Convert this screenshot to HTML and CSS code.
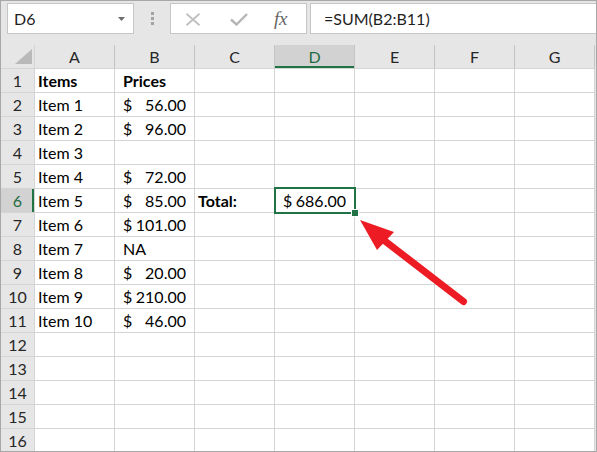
FILE: index.html
```html
<!DOCTYPE html>
<html>
<head>
<meta charset="utf-8">
<link rel="stylesheet" href="styles.css">
</head>
<body>
<div class="window">
  <div class="toolbar">
    <div class="namebox">
      <span>D6</span>
      <svg class="dd" width="7" height="4" viewBox="0 0 7 4"><polygon points="0,0 7,0 3.5,4" fill="#6d6d6d"/></svg>
    </div>
    <div class="grip"><i></i><i></i><i></i></div>
    <div class="fbtns">
      <svg class="x" width="16" height="13" viewBox="0 0 16 13"><path d="M1.5 0.8 L14.5 12.2 M14.5 0.8 L1.5 12.2" stroke="#c0c0c0" stroke-width="1.8" fill="none"/></svg>
      <svg class="ok" width="18" height="13" viewBox="0 0 18 13"><path d="M1 6.5 L6.5 11.5 L17 1" stroke="#b5b5b5" stroke-width="2.4" fill="none"/></svg>
      <span class="fx">fx</span>
    </div>
    <div class="finput">=SUM(B2:B11)</div>
  </div>

  <div class="sheet">
    <div class="corner"><svg width="33" height="23" viewBox="0 0 33 23"><polygon points="14,19 31,4 31,19" fill="#b9b9b9"/></svg></div>
    <div class="ch">A</div><div class="ch">B</div><div class="ch">C</div><div class="ch sel">D</div><div class="ch">E</div><div class="ch">F</div><div class="ch">G</div>

    <div class="rh">1</div><div class="c bold">Items</div><div class="c b bold">Prices</div><div class="c"></div><div class="c"></div><div class="c"></div><div class="c"></div><div class="c"></div>
    <div class="rh">2</div><div class="c">Item 1</div><div class="c acc"><span>$</span><span>56.00</span></div><div class="c"></div><div class="c"></div><div class="c"></div><div class="c"></div><div class="c"></div>
    <div class="rh">3</div><div class="c">Item 2</div><div class="c acc"><span>$</span><span>96.00</span></div><div class="c"></div><div class="c"></div><div class="c"></div><div class="c"></div><div class="c"></div>
    <div class="rh">4</div><div class="c">Item 3</div><div class="c"></div><div class="c"></div><div class="c"></div><div class="c"></div><div class="c"></div><div class="c"></div>
    <div class="rh">5</div><div class="c">Item 4</div><div class="c acc"><span>$</span><span>72.00</span></div><div class="c"></div><div class="c"></div><div class="c"></div><div class="c"></div><div class="c"></div>
    <div class="rh sel">6</div><div class="c">Item 5</div><div class="c acc"><span>$</span><span>85.00</span></div><div class="c bold">Total:</div><div class="c acc active"><span>$</span><span>686.00</span></div><div class="c"></div><div class="c"></div><div class="c"></div>
    <div class="rh">7</div><div class="c">Item 6</div><div class="c acc"><span>$</span><span>101.00</span></div><div class="c"></div><div class="c"></div><div class="c"></div><div class="c"></div><div class="c"></div>
    <div class="rh">8</div><div class="c">Item 7</div><div class="c b">NA</div><div class="c"></div><div class="c"></div><div class="c"></div><div class="c"></div><div class="c"></div>
    <div class="rh">9</div><div class="c">Item 8</div><div class="c acc"><span>$</span><span>20.00</span></div><div class="c"></div><div class="c"></div><div class="c"></div><div class="c"></div><div class="c"></div>
    <div class="rh">10</div><div class="c">Item 9</div><div class="c acc"><span>$</span><span>210.00</span></div><div class="c"></div><div class="c"></div><div class="c"></div><div class="c"></div><div class="c"></div>
    <div class="rh">11</div><div class="c">Item 10</div><div class="c acc"><span>$</span><span>46.00</span></div><div class="c"></div><div class="c"></div><div class="c"></div><div class="c"></div><div class="c"></div>
    <div class="rh">12</div><div class="c"></div><div class="c"></div><div class="c"></div><div class="c"></div><div class="c"></div><div class="c"></div><div class="c"></div>
    <div class="rh">13</div><div class="c"></div><div class="c"></div><div class="c"></div><div class="c"></div><div class="c"></div><div class="c"></div><div class="c"></div>
    <div class="rh">14</div><div class="c"></div><div class="c"></div><div class="c"></div><div class="c"></div><div class="c"></div><div class="c"></div><div class="c"></div>
    <div class="rh">15</div><div class="c"></div><div class="c"></div><div class="c"></div><div class="c"></div><div class="c"></div><div class="c"></div><div class="c"></div>
    <div class="rh">16</div><div class="c"></div><div class="c"></div><div class="c"></div><div class="c"></div><div class="c"></div><div class="c"></div><div class="c"></div>
  </div>

  <svg class="arrow" width="595" height="450" viewBox="0 0 595 450">
    <line x1="462.5" y1="300.5" x2="380" y2="237" stroke="#ed1c24" stroke-width="7" stroke-linecap="round"/>
    <polygon points="359,219 393,231 376,249" fill="#ed1c24"/>
  </svg>
</div>
</body>
</html>
```
FILE: styles.css
```css
html, body {
  margin: 0;
  padding: 0;
  background: #ffffff;
}

body {
  font-family: "Lato", "Liberation Sans", sans-serif;
  font-size: 16px;
  color: #000;
}

.window {
  position: relative;
  width: 595px;
  height: 450px;
  border: 1px solid #a8a8a8;
  background: #e6e6e6;
  overflow: hidden;
}

/* ---------- formula bar ---------- */
.toolbar {
  display: flex;
  align-items: flex-start;
  height: 44px;
  box-sizing: border-box;
  padding: 2px 0 0 6px;
}

.namebox {
  width: 127px;
  height: 31px;
  box-sizing: border-box;
  border: 1px solid #c6c6c6;
  background: #fff;
  display: flex;
  align-items: center;
  justify-content: space-between;
  padding: 0 8px 0 6px;
  color: #1f1f1f;
}

.grip {
  margin: 9px 0 0 17px;
  display: flex;
  flex-direction: column;
  gap: 2px;
}

.grip i {
  display: block;
  width: 3px;
  height: 3px;
  background: #a2a2a2;
}

.fbtns {
  margin-left: 16px;
  width: 137px;
  height: 31px;
  box-sizing: border-box;
  border: 1px solid #c6c6c6;
  background: #fff;
  display: flex;
  align-items: center;
  padding-left: 14px;
}

.fbtns .x {
  margin-top: 1px;
}

.fbtns .ok {
  margin-left: 29px;
  margin-top: 2px;
}

.fx {
  margin-left: 26px;
  font-family: "Liberation Serif", "DejaVu Serif", serif;
  font-style: italic;
  font-size: 19px;
  color: #666;
  letter-spacing: -0.3px;
}

.finput {
  flex: 1;
  margin-left: 3px;
  height: 31px;
  box-sizing: border-box;
  border: 1px solid #c6c6c6;
  border-right: none;
  background: #fff;
  padding-left: 13px;
  line-height: 29px;
  color: #1f1f1f;
}

/* ---------- sheet ---------- */
.sheet {
  display: grid;
  grid-template-columns: 33px repeat(7, 79px);
  grid-template-rows: 23px;
  grid-auto-rows: 23px;
  gap: 1px;
  width: 593px;
  padding-right: 1px;
  background: #d4d4d4;
}

.corner {
  background: #e6e6e6;
  line-height: 0;
}

.ch,
.rh {
  background: #e6e6e6;
  color: #262626;
  text-align: center;
  line-height: 23px;
  box-shadow: 1px 0 0 #c4c4c4;
}

.ch.sel {
  background: #d2d2d2;
  color: #1e6b40;
  box-shadow: inset 0 -2px 0 #217346, 1px 0 0 #c4c4c4;
}

.rh {
  box-shadow: none;
}

.rh.sel {
  background: #d2d2d2;
  color: #1e6b40;
  box-shadow: inset -2px 0 0 #217346;
}

.c {
  background: #fff;
  line-height: 23px;
  padding: 0 3px;
  white-space: nowrap;
}

.bold {
  font-weight: bold;
}

.b {
  padding-left: 8px;
}

.acc {
  display: flex;
  justify-content: space-between;
  padding: 0 8px;
}

.active {
  position: relative;
  z-index: 2;
}

.active::after {
  content: "";
  position: absolute;
  top: -2px;
  left: -1px;
  right: -2px;
  bottom: -2px;
  border: 2px solid #217346;
}

.active::before {
  content: "";
  position: absolute;
  right: -5px;
  bottom: -5px;
  width: 6px;
  height: 6px;
  background: #217346;
  border: 1px solid #fff;
  z-index: 3;
}

/* ---------- annotation ---------- */
.arrow {
  position: absolute;
  left: 0;
  top: 0;
  pointer-events: none;
  z-index: 5;
}
```
